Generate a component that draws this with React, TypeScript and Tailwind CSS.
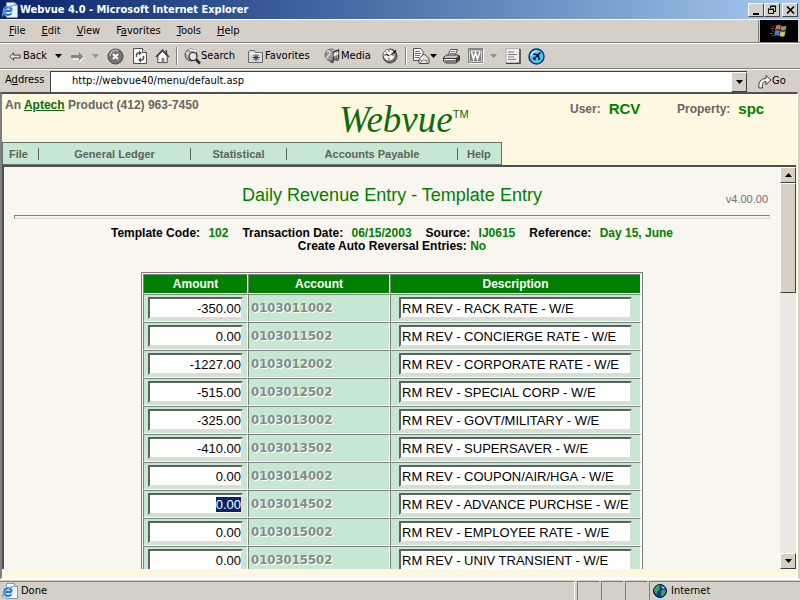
import { useEffect, useRef } from "react";
import type { ReactNode } from "react";
import { clsx } from "clsx";

const MENUS = [
  { key: "F", before: "", after: "ile" },
  { key: "E", before: "", after: "dit" },
  { key: "V", before: "", after: "iew" },
  { key: "a", before: "F", after: "vorites" },
  { key: "T", before: "", after: "ools" },
  { key: "H", before: "", after: "elp" },
];

const ROWS = [
  { amount: "-350.00", account: "0103011002", description: "RM REV - RACK RATE - W/E" },
  { amount: "0.00", account: "0103011502", description: "RM REV - CONCIERGE RATE - W/E" },
  { amount: "-1227.00", account: "0103012002", description: "RM REV - CORPORATE RATE - W/E" },
  { amount: "-515.00", account: "0103012502", description: "RM REV - SPECIAL CORP - W/E" },
  { amount: "-325.00", account: "0103013002", description: "RM REV - GOVT/MILITARY - W/E" },
  { amount: "-410.00", account: "0103013502", description: "RM REV - SUPERSAVER - W/E" },
  { amount: "0.00", account: "0103014002", description: "RM REV - COUPON/AIR/HGA - W/E" },
  { amount: "0.00", account: "0103014502", description: "RM REV - ADVANCE PURCHSE - W/E", active: true },
  { amount: "0.00", account: "0103015002", description: "RM REV - EMPLOYEE RATE - W/E" },
  { amount: "0.00", account: "0103015502", description: "RM REV - UNIV TRANSIENT - W/E" },
];

const raised = "border border-t-white border-l-white border-r-[#404040] border-b-[#404040] bg-[#d4d0c8]";
const sunken = "border-2 border-t-[#606060] border-l-[#606060] border-r-[#dcdcd4] border-b-[#dcdcd4]";

/* ---------- icons ---------- */

function IePage() {
  return (
    <svg width="16" height="16" viewBox="0 0 16 16" className="shrink-0">
      <path d="M4.500.500h8l3 3v12h-11z" fill="#eef4fa" stroke="#8a98a8" />
      <path d="M12.500.500v3h3" fill="#c8d8e8" stroke="#8a98a8" />
      <circle cx="6" cy="9" r="5.200" fill="#d4e8fa" />
      <path d="M9.500 9H2.500M9.300 11.200A3.900 3.900 0 1 1 9.900 8.500" fill="none" stroke="#2a74c8" strokeWidth="2" />
      <path d="M1 14.500C-.500 12 4 5 11.500 3.500" fill="none" stroke="#58a8e8" strokeWidth="1.400" />
    </svg>
  );
}

function BackArrow() {
  return (
    <svg width="13" height="11" viewBox="0 0 13 11">
      <path d="M1 5.500 5 1.500v2.500h7v3H5v2.500z" fill="#e8e8e4" stroke="#303030" />
    </svg>
  );
}

function ForwardArrow() {
  return (
    <svg width="13" height="11" viewBox="0 0 13 11">
      <path d="M13 6.500 9 11V8H2" fill="none" stroke="#fff" />
      <path d="M12 5.500 8 1v3H0v3h8v3z" fill="#848484" />
    </svg>
  );
}

function Stop() {
  return (
    <svg width="17" height="17" viewBox="0 0 17 17">
      <circle cx="8.500" cy="8.500" r="7.500" fill="#747474" stroke="#404040" />
      <path d="M3 8a5.500 5.500 0 0 1 8-5" fill="none" stroke="#b8b8b8" strokeWidth="1.500" />
      <path d="m6 6 5 5m0-5-5 5" stroke="#fff" strokeWidth="1.800" />
    </svg>
  );
}

function Refresh() {
  return (
    <svg width="14" height="16" viewBox="0 0 14 16">
      <path d="M.5.500h9l4 4v11H.500z" fill="#fff" stroke="#505050" />
      <path d="M9.500.500v4h4" fill="#ddd" stroke="#505050" />
      <path d="M3.500 9V7a2 2 0 0 1 2-2H7M10.500 8v2a2 2 0 0 1-2 2H7" fill="none" stroke="#505050" strokeWidth="1.500" />
      <path d="M6 2.500 9 5 6 7.500zM8 9.500 5 12l3 2.500z" fill="#505050" />
    </svg>
  );
}

function Home() {
  return (
    <svg width="16" height="16" viewBox="0 0 16 16">
      <path d="M11 2h2v4h-2z" fill="#505050" />
      <path d="M3 8v7h10V8L8 3z" fill="#f8f8f8" stroke="#404040" />
      <path d="M1 9 8 1.500 15 9" fill="none" stroke="#404040" strokeWidth="1.500" />
      <path d="M7 10h3v5H7z" fill="#808080" />
    </svg>
  );
}

function SearchGlobe() {
  return (
    <svg width="17" height="17" viewBox="0 0 17 17" className="shrink-0">
      <circle cx="7" cy="7" r="6" fill="#a8a8a8" stroke="#505050" />
      <path d="M2 5c3-1 3 2 2 4M5 1.500c3 1 5 0 7 2" fill="none" stroke="#f0f0f0" strokeWidth="1.500" />
      <circle cx="9" cy="8.500" r="4" fill="#e4e4e4" stroke="#282828" strokeWidth="1.200" />
      <path d="m12 11.500 4 4" stroke="#282828" strokeWidth="2.500" />
    </svg>
  );
}

function FavoritesFolder() {
  return (
    <svg width="16" height="14" viewBox="0 0 16 14" className="shrink-0">
      <path d="M.500 13.500v-11l1-1h5l1 2h7v10z" fill="#d8d8d8" stroke="#686868" />
      <path d="M1.500 4.500h12" stroke="#fff" />
      <path d="M8 5v7M4.500 8.500h7M5.500 6l5 5m0-5-5 5" stroke="#303030" />
    </svg>
  );
}

function MediaGlobe() {
  return (
    <svg width="17" height="17" viewBox="0 0 17 17" className="shrink-0">
      <circle cx="7" cy="7" r="6" fill="#989898" stroke="#686868" />
      <path d="M3 4c2-2 4 0 3 2s-4 2-3 5M9 2l3 3" fill="none" stroke="#d8d8d8" strokeWidth="1.500" />
      <path d="M9.500 13V4l5-2v9" fill="none" stroke="#303030" strokeWidth="1.300" />
      <path d="M9.500 5.500v3l5-2V4z" fill="#e8e8e8" />
      <ellipse cx="8" cy="13.500" rx="2.200" ry="1.800" fill="#606060" />
      <ellipse cx="13" cy="11.500" rx="2" ry="1.600" fill="#606060" />
    </svg>
  );
}

function History() {
  return (
    <svg width="17" height="16" viewBox="0 0 17 16">
      <circle cx="8" cy="8" r="7" fill="#707070" stroke="#404040" />
      <circle cx="7" cy="7" r="5.500" fill="#f4f4f4" />
      <path d="M7 2v2M2 7h2M7 10v2M10 7h2M3.500 3.500l1 1" stroke="#505050" />
      <path d="m7 8 7-6.500v3z" fill="#202020" />
      <path d="M7 8 4 6" stroke="#202020" strokeWidth="1.500" />
    </svg>
  );
}

function Mail() {
  return (
    <svg width="17" height="16" viewBox="0 0 17 16">
      <path d="M.500.500h7l2.500 3v9H.500z" fill="#fff" stroke="#505050" />
      <path d="M2 3.500h5M2 5.500h6M2 7.500h5M2 9.500h4" stroke="#707070" />
      <path d="M6 10.500 11 6l5 4.500v5H6z" fill="#e8e8e8" stroke="#484848" />
      <path d="m6 15.500 5-4 5 4M6 10.500l3 2.500m7-2.500L13 13" fill="none" stroke="#888" />
    </svg>
  );
}

function Printer() {
  return (
    <svg width="17" height="15" viewBox="0 0 17 15">
      <path d="M5 6.500 7.500.500h7L12 6.500z" fill="#fff" stroke="#505050" />
      <path d="M8 2.500h4.500M7 4.500h5" stroke="#707070" />
      <path d="M.500 8.500 3.500 6h11l2 1v4l-3 3h-11l-2-2z" fill="#c4c4c4" stroke="#303030" />
      <path d="M1 9.500h12l3-2.500M2 12h11" fill="none" stroke="#303030" />
      <path d="M2 10.500h9" stroke="#fff" />
      <path d="M13 9.500V14l3.500-3V7z" fill="#404040" />
    </svg>
  );
}

function WordEdit() {
  return (
    <svg width="16" height="16" viewBox="0 0 16 16">
      <path d="M1 15.500h14.500V1" fill="none" stroke="#fff" />
      <path d="M0 0h15v15H0z" fill="#848484" />
      <path d="M1.500 2.500v11h12v-11" fill="none" stroke="#d4d0c8" />
      <path d="m3.500 3.500 2 7.500 2-6.500 2 6.500 2.500-7.500" fill="none" stroke="#fff" strokeWidth="1.500" />
      <path d="M2.500 3h10" stroke="#fff" />
    </svg>
  );
}

function Discuss() {
  return (
    <svg width="16" height="16" viewBox="0 0 16 16">
      <path d="M1 .500h14v12l-3 3H1z" fill="#ececec" stroke="#b0b0b0" />
      <path d="M15 1v14.500H1" fill="none" stroke="#404040" strokeWidth="1.500" />
      <path d="M3 4h6M3 6.500h9M3 9h6M3 11.500h8" stroke="#808080" />
    </svg>
  );
}

function Messenger() {
  return (
    <svg width="17" height="17" viewBox="0 0 17 17">
      <circle cx="8.500" cy="8.500" r="7.500" fill="#50c8ec" stroke="#102c80" strokeWidth="1.500" />
      <path d="M3 8a6 6 0 0 1 6-5" stroke="#c0f4ff" strokeWidth="1.500" fill="none" />
      <path d="m12.500 4.500-7 7M5.500 6l4.500 1 1.500 5M5 9.500l2.500 2.500" fill="none" stroke="#081850" strokeWidth="1.700" />
    </svg>
  );
}

function GoArrow() {
  return (
    <svg width="14" height="15" viewBox="0 0 14 15" className="shrink-0">
      <path d="M1 14C0 8 3 4.500 8 4.500V1.500l5 4.500-5 4.500v-3C5 7.500 4 10 4.500 14z" fill="#f8f8f8" stroke="#383838" />
    </svg>
  );
}

function WindowsFlag() {
  return (
    <svg width="18" height="16" viewBox="0 0 18 16">
      <path d="M6 3c2-1.500 3-1.500 5-.500L10 7c-2-1-3-1-5 .500z" fill="#c87058" />
      <path d="M11.500 3c2 .500 3 .500 5-.500l-1 4.500c-2 1-3 1-5 0z" fill="#88a060" />
      <path d="M5 8c2-1.500 3-1 5 0l-1 5c-2-1-3-1-5 .500z" fill="#5878c0" />
      <path d="M10.500 8c2 1 3 1 5 0l-1 5c-2 1-3 1-5 0z" fill="#d8c058" />
      <path d="M3 3.500h1.500M1 5.500h3M2 8h2M0 10.500h3M2 12.500h1.500" stroke="#784858" />
    </svg>
  );
}

function Globe() {
  return (
    <svg width="14" height="14" viewBox="0 0 14 14" className="shrink-0">
      <circle cx="7" cy="7" r="6.500" fill="#1838a0" stroke="#081840" />
      <path d="M1 6c1-3 3-5 5.500-5 1 1-1 2 0 3.500S3 7 4 9.500 2 10 1 6zM8 7c2-2 3 0 5-1 0 3-2 5-4 6.500C7 11 9 9 8 7z" fill="#38a848" />
      <path d="M8 2c2 0 3 1 4 2.500L10 5z" fill="#88d0f0" />
    </svg>
  );
}

function Caret({ muted }: { muted?: boolean }) {
  return (
    <svg width="7" height="4" viewBox="0 0 7 4">
      <path d="M0 0h7L3.500 4z" fill={muted ? "#909090" : "#000"} />
    </svg>
  );
}

/* ---------- browser chrome ---------- */

function TitleBar() {
  return (
    <header className="flex h-[19px] shrink-0 items-center bg-gradient-to-r from-[#0a246a] to-[#a6caf0] pr-0.5 pl-0.5">
      <IePage />
      <h1 className="ml-0.5 flex-1 font-bold whitespace-nowrap text-white">
        Webvue 4.0 - Microsoft Internet Explorer
      </h1>
      <button aria-label="Minimize" className={clsx(raised, "flex h-3.5 w-4 items-end justify-center pb-px")}>
        <span className="h-0.5 w-1.5 bg-black" />
      </button>
      <button aria-label="Restore" className={clsx(raised, "flex h-3.5 w-4 items-center justify-center")}>
        <svg width="10" height="10" viewBox="0 0 10 10" fill="none" stroke="#000">
          <path d="M3.500 3V1.500h5v5H7M3 1h6" />
          <path d="M1.500 4.500h5v4h-5zM1 4h6" />
        </svg>
      </button>
      <button aria-label="Close" className={clsx(raised, "ml-0.5 flex h-3.5 w-4 items-center justify-center")}>
        <svg width="9" height="8" viewBox="0 0 9 8" stroke="#000" strokeWidth="1.600">
          <path d="m1 .500 7 7m0-7-7 7" />
        </svg>
      </button>
    </header>
  );
}

function MenuBar() {
  return (
    <div className="flex h-6 shrink-0 border-t border-b border-t-white border-b-[#808080]">
      <nav className="flex flex-1 items-center gap-4 border-r border-[#808080] pl-[9px]">
        {MENUS.map((m) => (
          <button key={m.key}>
            {m.before}
            <u>{m.key}</u>
            {m.after}
          </button>
        ))}
      </nav>
      <div className="mr-0.5 ml-px flex w-[38px] items-center justify-center bg-black">
        <WindowsFlag />
      </div>
    </div>
  );
}

function ToolButton({ label, icon, className }: { label: string; icon: ReactNode; className?: string }) {
  return (
    <button aria-label={label} className={clsx("flex shrink-0 items-center justify-center", className)}>
      {icon}
    </button>
  );
}

function Divider({ className }: { className?: string }) {
  return <span className={clsx("h-[18px] w-0.5 shrink-0 border-l border-[#808080] bg-white", className)} />;
}

function ToolBar() {
  return (
    <div className="flex h-[26px] shrink-0 items-center border-t border-b border-t-white border-b-[#808080] pl-[9px]">
      <button className="flex w-[38px] items-center gap-0.5">
        <BackArrow />
        Back
      </button>
      <ToolButton label="Back history" icon={<Caret />} className="ml-2 w-[7px]" />
      <ToolButton label="Forward" icon={<ForwardArrow />} className="ml-2 w-[14px]" />
      <ToolButton label="Forward history" icon={<Caret muted />} className="ml-2 w-[7px]" />
      <ToolButton label="Stop" icon={<Stop />} className="ml-2 w-[17px]" />
      <ToolButton label="Refresh" icon={<Refresh />} className="ml-2 w-[15px]" />
      <ToolButton label="Home" icon={<Home />} className="ml-2 w-[15px]" />
      <Divider className="ml-[6px]" />
      <button className="ml-[6px] flex w-[60px] items-center">
        <SearchGlobe />
        Search
      </button>
      <button className="ml-[4px] flex w-[72px] items-center gap-px">
        <FavoritesFolder />
        Favorites
      </button>
      <button className="ml-[4px] flex w-[54px] items-center">
        <MediaGlobe />
        Media
      </button>
      <ToolButton label="History" icon={<History />} className="ml-1 w-[17px]" />
      <Divider className="ml-[6px]" />
      <ToolButton label="Mail" icon={<Mail />} className="ml-[6px] w-[17px]" />
      <ToolButton label="Mail options" icon={<Caret />} className="w-[7px]" />
      <ToolButton label="Print" icon={<Printer />} className="ml-[6px] w-[17px]" />
      <ToolButton label="Edit" icon={<WordEdit />} className="ml-2 w-[16px]" />
      <ToolButton label="Edit options" icon={<Caret muted />} className="ml-[6px] w-[7px]" />
      <ToolButton label="Discuss" icon={<Discuss />} className="ml-2 w-[16px]" />
      <ToolButton label="Messenger" icon={<Messenger />} className="ml-[6px] w-[18px]" />
    </div>
  );
}

function AddressBar() {
  return (
    <div className="flex h-[23px] shrink-0 items-center border-t border-white pl-[5px]">
      <label htmlFor="address" className="w-[45px] pb-0.5">
        A<u>d</u>dress
      </label>
      <div className="flex h-[21px] flex-1 border-t border-l border-t-[#404040] border-l-[#404040] bg-white">
        <input
          id="address"
          defaultValue="http://webvue40/menu/default.asp"
          className="min-w-0 flex-1 pb-0.5 pl-[21px] outline-none"
        />
        <button aria-label="Address list" className={clsx(raised, "flex w-4 items-center justify-center")}>
          <Caret />
        </button>
      </div>
      <button className="ml-[11px] flex w-[42px] items-center">
        <GoArrow />
        Go
      </button>
    </div>
  );
}

function StatusBar() {
  return (
    <footer className="flex h-[21px] shrink-0 items-stretch gap-0.5 border-t border-white pt-px">
      <div className="flex flex-1 items-center gap-[3px] border-t border-r border-t-[#808080] border-r-white pl-0.5">
        <IePage />
        Done
      </div>
      <div className="w-[22px] border-t border-l border-[#808080]" />
      <div className="w-[22px] border-t border-l border-[#808080]" />
      <div className="w-[22px] border-t border-l border-[#808080]" />
      <div className="flex w-[151px] items-center gap-1 border-t border-l border-[#808080] pl-[3px]">
        <Globe />
        Internet
      </div>
    </footer>
  );
}

/* ---------- Webvue page ---------- */

function NavBar() {
  const bar = <span className="h-3 w-px bg-[#5c645c]" />;

  return (
    <nav className="flex h-[23px] w-[500px] items-center border border-[#60706a] bg-[#c6e7d2] text-[11px] font-bold text-[#5c645c]">
      <a href="#file" className="w-[35px] pl-[6px]">File</a>
      {bar}
      <a href="#ledger" className="w-[151px] text-center">General Ledger</a>
      {bar}
      <a href="#statistical" className="w-[95px] text-center">Statistical</a>
      {bar}
      <a href="#payable" className="w-[170px] text-center">Accounts Payable</a>
      {bar}
      <a href="#help" className="flex-1 pl-[9px]">Help</a>
    </nav>
  );
}

function Banner() {
  return (
    <div className="grid h-[71px] shrink-0 grid-rows-[48px_23px] bg-[#fff8e1] font-['Liberation_Sans',Arial,sans-serif]">
      <div className="flex items-start text-xs font-bold text-[#666]">
        <p className="w-[337px] pt-[3px] pl-[3px]">
          An <a href="#aptech" className="text-[#0b6b0b] underline">Aptech</a> Product (412) 963-7450
        </p>
        <p className="flex-1 pt-1.5 font-['Liberation_Serif','Times_New_Roman',serif] text-[37px] leading-10 font-normal text-[#0b6b0b] italic">
          Webvue<sup className="top-[-14px] font-['Liberation_Sans',Arial,sans-serif] text-[11px] not-italic">TM</sup>
        </p>
        <p className="flex w-[107px] items-center gap-2 pt-[5px]">
          User: <span className="text-[15px] text-[#008000]">RCV</span>
        </p>
        <p className="flex w-[119px] items-center gap-2 pt-[5px]">
          Property: <span className="text-[15px] text-[#008000]">spc</span>
        </p>
      </div>
      <NavBar />
    </div>
  );
}

function Field({ label, value }: { label: string; value: string }) {
  return (
    <span>
      {label}: <span className="ml-[5px] text-[#008000]">{value}</span>
    </span>
  );
}

const cell = "border border-t-[#808080] border-l-[#808080] border-r-white border-b-white";

function EntryTable() {
  const active = useRef<HTMLInputElement>(null);

  useEffect(() => {
    active.current?.focus({ preventScroll: true });
    active.current?.select();
  }, []);

  return (
    <table className="mx-auto mt-[19px] w-[502px] table-fixed border-separate border-spacing-0 border border-[#808080] bg-[#f4f4ee] p-px">
      <thead>
        <tr className="h-5 bg-[#008000] text-xs text-white">
          <th className={clsx(cell, "w-[105px] py-px")}>Amount</th>
          <th className={clsx(cell, "w-[142px] py-px")}>Account</th>
          <th className={clsx(cell, "py-px")}>Description</th>
        </tr>
      </thead>
      <tbody className="bg-[#c6e7d2]">
        {ROWS.map((row) => (
          <tr key={row.account} className="h-7">
            <td className={clsx(cell, "pr-1 pl-1")}>
              <input
                ref={row.active ? active : undefined}
                aria-label={`Amount ${row.account}`}
                defaultValue={row.amount}
                className={clsx(
                  sunken,
                  "block h-[22px] w-full bg-white text-right text-[13px] outline-none selection:bg-[#0a246a] selection:text-white",
                )}
              />
            </td>
            <td className={clsx(cell, "pl-0.5 font-['DejaVu_Sans_Condensed','DejaVu_Sans',sans-serif] text-[13px] font-bold text-[#848c86] [text-shadow:1px_1px_#fff]")}>
              {row.account}
            </td>
            <td className={clsx(cell, "px-2")}>
              <input
                aria-label={`Description ${row.account}`}
                defaultValue={row.description}
                className={clsx(sunken, "block h-[22px] w-full bg-white pl-px text-[13px] outline-none")}
              />
            </td>
          </tr>
        ))}
      </tbody>
    </table>
  );
}

function ScrollBar() {
  return (
    <div className="flex w-4 shrink-0 flex-col bg-[#ebe9e5]">
      <button aria-label="Scroll up" className={clsx(raised, "flex h-4 items-center justify-center")}>
        <svg width="7" height="4" viewBox="0 0 7 4">
          <path d="M0 4h7L3.500 0z" />
        </svg>
      </button>
      <div className={clsx(raised, "h-[110px]")} />
      <button aria-label="Scroll down" className={clsx(raised, "mt-auto flex h-4 items-center justify-center")}>
        <Caret />
      </button>
    </div>
  );
}

function EntryPage() {
  return (
    <div className="flex min-h-0 flex-1 border-t-2 border-l-2 border-[#505050]">
      <main className="min-w-0 flex-1 overflow-hidden bg-[#f9f5ef] px-[10px] font-['Liberation_Sans',Arial,sans-serif]">
        <div className="grid grid-cols-[1fr_auto_1fr] pt-4">
          <h2 className="col-start-2 text-lg leading-6 text-[#008000]">Daily Revenue Entry - Template Entry</h2>
          <span className="self-end pr-0.5 text-right text-[11px] text-[#707070]">v4.00.00</span>
        </div>
        <hr className="mt-2 h-1 border border-t-[#808080] border-r-[#d8d4d0] border-b-[#d8d4d0] border-l-[#808080]" />
        <div className="mt-2 text-xs leading-[13px] font-bold">
          <p className="flex justify-center gap-[14px]">
            <Field label="Template Code" value="102" />
            <Field label="Transaction Date" value="06/15/2003" />
            <Field label="Source" value="IJ0615" />
            <Field label="Reference" value="Day 15, June" />
          </p>
          <p className="text-center">
            Create Auto Reversal Entries: <span className="text-[#008000]">No</span>
          </p>
        </div>
        <EntryTable />
      </main>
      <ScrollBar />
    </div>
  );
}

export default function App() {
  return (
    <div className="flex h-screen flex-col overflow-hidden bg-[#d4d0c8] font-['DejaVu_Sans_Condensed','DejaVu_Sans',sans-serif] text-[11px] leading-4 text-black">
      <TitleBar />
      <MenuBar />
      <ToolBar />
      <AddressBar />
      <div className="mr-0.5 flex min-h-0 flex-1 flex-col border-t-2 border-r border-b border-l-2 border-t-[#505050] border-r-white border-b-white border-l-[#808080] bg-[#fff8e1] pr-px pb-[9px]">
        <Banner />
        <EntryPage />
      </div>
      <StatusBar />
    </div>
  );
}
